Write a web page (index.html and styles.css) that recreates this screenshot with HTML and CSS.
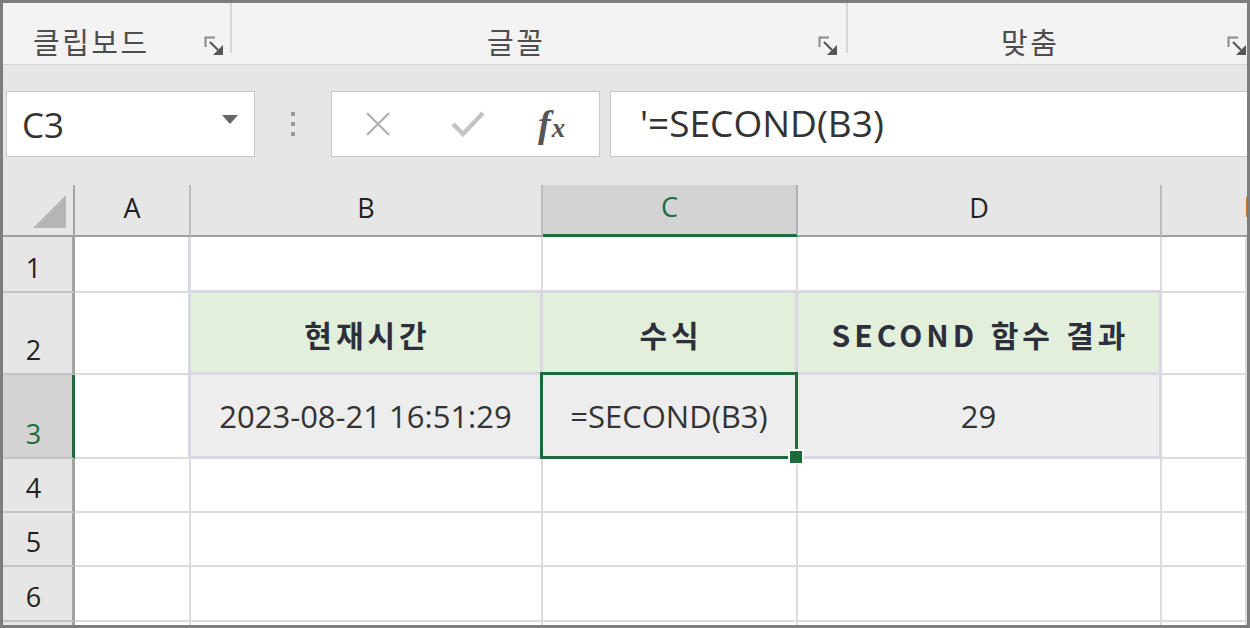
FILE: index.html
```html
<!DOCTYPE html>
<html lang="ko">
<head>
<meta charset="utf-8">
<link rel="stylesheet" href="styles.css">
</head>
<body>
<div class="frame">
  <div class="ribbon">
    <div class="group g1">
      <span class="glabel">클립보드</span>
      <svg class="launcher" viewBox="0 0 20 20" width="20" height="20"><path d="M1.5 11V1.5H11" fill="none" stroke="#8a8a8a" stroke-width="2"/><path d="M6 6L14 14" stroke="#555" stroke-width="2.2"/><polygon points="9,19 19,19 19,9" fill="#555"/></svg>
    </div>
    <div class="group g2">
      <span class="glabel">글꼴</span>
      <svg class="launcher" viewBox="0 0 20 20" width="20" height="20"><path d="M1.5 11V1.5H11" fill="none" stroke="#8a8a8a" stroke-width="2"/><path d="M6 6L14 14" stroke="#555" stroke-width="2.2"/><polygon points="9,19 19,19 19,9" fill="#555"/></svg>
    </div>
    <div class="group g3">
      <span class="glabel">맞춤</span>
      <svg class="launcher" viewBox="0 0 20 20" width="20" height="20"><path d="M1.5 11V1.5H11" fill="none" stroke="#8a8a8a" stroke-width="2"/><path d="M6 6L14 14" stroke="#555" stroke-width="2.2"/><polygon points="9,19 19,19 19,9" fill="#555"/></svg>
    </div>
  </div>

  <div class="fbar">
    <div class="namebox">
      <span class="nb-text">C3</span>
      <svg class="nb-arrow" viewBox="0 0 16 9" width="16" height="9"><polygon points="0,0 16,0 8,9" fill="#666"/></svg>
    </div>
    <div class="dots"><i></i><i></i><i></i></div>
    <div class="iconbox">
      <svg class="ic-x" viewBox="0 0 30 24" width="30" height="24"><path d="M4 1L26 23M26 1L4 23" stroke="#b3b3b3" stroke-width="2.4" fill="none"/></svg>
      <svg class="ic-check" viewBox="0 0 34 26" width="34" height="26"><path d="M2 13L12 23L32 2" stroke="#c4c4c4" stroke-width="4.5" fill="none"/></svg>
      <span class="fx"><span class="fx-f">f</span><span class="fx-x">x</span></span>
    </div>
    <div class="finput">'=SECOND(B3)</div>
  </div>

  <div class="sheet">
    <div class="h corner"><span class="tri"></span></div>
    <div class="h ch">A</div>
    <div class="h ch">B</div>
    <div class="h ch sel">C</div>
    <div class="h ch">D</div>
    <div class="h ch last"><span class="peek"></span></div>

    <div class="h rh">1</div>
    <div class="c ta-r"></div>
    <div class="c ta-b"></div>
    <div class="c ta-b"></div>
    <div class="c ta-b"></div>
    <div class="c"></div>

    <div class="h rh">2</div>
    <div class="c ta-r"></div>
    <div class="c t head">현재시간</div>
    <div class="c t head">수식</div>
    <div class="c t head">SECOND 함수 결과</div>
    <div class="c"></div>

    <div class="h rh sel">3</div>
    <div class="c ta-r"></div>
    <div class="c t val">2023-08-21 16:51:29</div>
    <div class="c t val active">=SECOND(B3)<span class="selbox"></span><span class="handle"></span></div>
    <div class="c t val">29</div>
    <div class="c"></div>

    <div class="h rh">4</div>
    <div class="c"></div><div class="c"></div><div class="c"></div><div class="c"></div><div class="c"></div>

    <div class="h rh">5</div>
    <div class="c"></div><div class="c"></div><div class="c"></div><div class="c"></div><div class="c"></div>

    <div class="h rh">6</div>
    <div class="c"></div><div class="c"></div><div class="c"></div><div class="c"></div><div class="c"></div>

    <div class="h rh"></div>
    <div class="c"></div><div class="c"></div><div class="c"></div><div class="c"></div><div class="c"></div>
  </div>
</div>
</body>
</html>
```
FILE: styles.css
```css
* { box-sizing: border-box; }
html, body { margin: 0; padding: 0; background: #fff; }
body { font-family: "Open Sans", "Noto Sans CJK KR", sans-serif; }

.frame {
  width: 1250px;
  height: 628px;
  border: 3px solid #7d7d7d;
  overflow: hidden;
  display: flex;
  flex-direction: column;
  background: #e6e6e6;
}

/* ribbon */
.ribbon {
  height: 62px;
  flex: none;
  display: flex;
  background: #f3f3f3;
  border-bottom: 1px solid #d2d2d2;
}
.group {
  display: flex;
  align-items: flex-start;
  padding-top: 19px;
  border-right: 2px solid #d6d6d6;
  height: 50px;
}
.g1 { width: 229px; padding-left: 30px; padding-right: 6px; }
.g2 { width: 616px; padding-left: 255px; padding-right: 8px; }
.g3 { flex: 1; padding-left: 153px; padding-right: 0; border-right: none; }
.glabel {
  font-family: "Noto Sans CJK KR", sans-serif;
  font-size: 29px;
  line-height: 38px;
  color: #4d4d4d;
  letter-spacing: 2.5px;
}
.launcher { margin-left: auto; margin-top: 14px; }

/* formula bar */
.fbar {
  height: 120px;
  flex: none;
  display: flex;
  align-items: flex-start;
  padding: 26px 0 0 3px;
  background: #e6e6e6;
}
.namebox {
  width: 249px;
  height: 66px;
  background: #fff;
  border: 1px solid #c8c8c8;
  display: flex;
  align-items: center;
  padding-left: 15px;
  padding-right: 16px;
}
.nb-text { font-size: 35px; color: #333; }
.nb-arrow { margin-left: auto; margin-top: -10px; }
.dots {
  width: 76px;
  height: 66px;
  display: flex;
  flex-direction: column;
  align-items: center;
  justify-content: center;
  gap: 6px;
}
.dots i { width: 4px; height: 4px; background: #9a9a9a; display: block; }
.iconbox {
  width: 269px;
  height: 66px;
  background: #fff;
  border: 1px solid #c8c8c8;
  display: flex;
  align-items: center;
  padding-left: 31px;
}
.ic-x { margin-right: 58px; }
.ic-check { margin-right: 53px; }
.fx {
  font-family: "Liberation Serif", serif;
  font-style: italic;
  font-weight: bold;
  color: #555;
  display: flex;
  align-items: baseline;
}
.fx-f { font-size: 38px; }
.fx-x { font-size: 27px; margin-left: 1px; }
.finput {
  flex: 1;
  height: 66px;
  margin-left: 10px;
  background: #fff;
  border: 1px solid #c8c8c8;
  border-right: none;
  padding-left: 29px;
  font-size: 37px;
  line-height: 62px;
  color: #333;
}

/* sheet */
.sheet {
  flex: 1;
  display: grid;
  grid-template-columns: 72px 116px 352px 255px 364px 1fr;
  grid-template-rows: 52px 56px 82px 84px 54px 54px 55px 20px;
  background: #fff;
}
.h {
  background: #e6e6e6;
  color: #222;
  font-size: 27px;
  display: flex;
  justify-content: center;
}
.ch {
  align-items: center;
  padding-bottom: 6px;
  border-right: 2px solid #bdbdbd;
  border-bottom: 2px solid #9f9f9f;
  position: relative;
}
.ch.last { border-right: none; }
.ch.sel {
  background: #d3d3d3;
  color: #1e6e3e;
  border-bottom: 3px solid #1d6b3b;
  border-right-color: #b0b0b0;
}
.corner {
  border-right: 2px solid #a3a3a3;
  border-bottom: 2px solid #9f9f9f;
  position: relative;
}
.tri {
  position: absolute;
  left: 30px;
  top: 10px;
  width: 0;
  height: 0;
  border-left: 33px solid transparent;
  border-bottom: 33px solid #b5b5b5;
}
.peek {
  position: absolute;
  right: -2px;
  top: 12px;
  width: 3px;
  height: 20px;
  background: #c57a2c;
}
.rh {
  align-items: flex-end;
  padding-bottom: 4px;
  padding-right: 8px;
  line-height: 38px;
  border-right: 3px solid #a3a3a3;
  border-bottom: 2px solid #c4c4c4;
}
.rh.sel {
  background: #d3d3d3;
  color: #1e6e3e;
  border-right: 3px solid #1d6b3b;
}

.c {
  border-right: 2px solid #dcdcdc;
  border-bottom: 2px solid #dcdcdc;
  font-size: 31px;
  color: #333;
  position: relative;
}
.ta-r { border-right: 3px solid #d8d8e4; }
.ta-b { border-bottom: 3px solid #d8d8e4; }
.t {
  display: flex;
  align-items: center;
  justify-content: center;
  border-right: 3px solid #d8d8e4;
  border-bottom: 3px solid #d8d8e4;
}
.head {
  background: #e2efda;
  font-family: "Noto Sans CJK KR", sans-serif;
  font-weight: bold;
  font-size: 30px;
  color: #2d2f3d;
  letter-spacing: 4px;
  padding-top: 3px;
  padding-left: 4px;
}
.val { background: #ededed; padding-top: 1px; }
.active { z-index: 2; }
.selbox {
  position: absolute;
  left: -3px;
  top: -3px;
  right: -3px;
  bottom: -3px;
  border: 3px solid #1d6b3b;
}
.handle {
  position: absolute;
  right: -9px;
  bottom: -9px;
  width: 16px;
  height: 16px;
  background: #1d6b3b;
  border: 2px solid #fff;
}
```
